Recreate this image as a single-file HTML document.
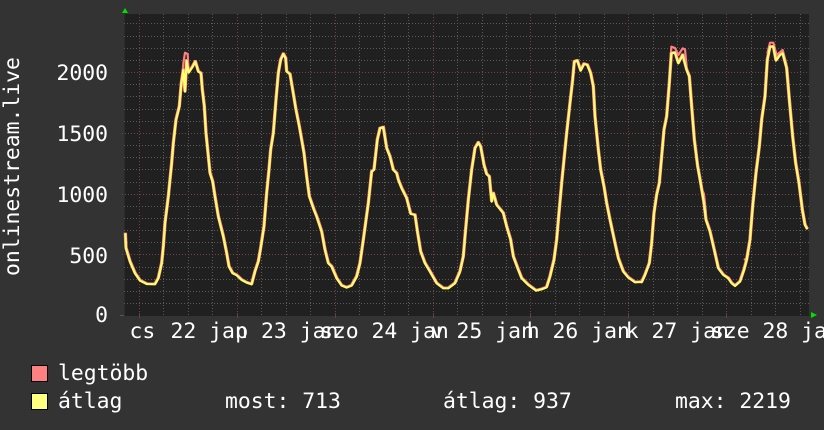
<!DOCTYPE html>
<html>
<head>
<meta charset="utf-8">
<style>
html,body{margin:0;padding:0;background:#333;width:824px;height:430px;overflow:hidden}
svg{display:block}
text{font-family:"DejaVu Sans Mono","Liberation Mono",monospace;font-size:21.4px;fill:#fff}
</style>
</head>
<body>
<svg width="824" height="430" viewBox="0 0 824 430" xmlns="http://www.w3.org/2000/svg">
<defs>
<g id="c" fill="none" stroke-linejoin="round">
<polyline transform="translate(120,40) scale(.33333)" stroke-width="6.5" points="16,580 18,625 30,665 45,700 60,722 80,732 105,733 115,715 125,670 130,620 135,550 145,470 155,370 160,310 168,240 178,200 184,130 190,90 195,155 200,62 206,98 218,80 226,65 235,95 243,100 247,150 253,200 258,280 265,350 270,400 278,425 285,470 295,530 310,590 320,640 327,680 338,700 350,706 365,720 380,728 395,733 405,695 415,665 422,625 432,560 440,460 447,390 452,330 460,280 468,180 475,100 482,60 490,42 497,55 500,95 510,103 518,150 528,210"/>
<polyline transform="translate(290,110) scale(.33333)" stroke-width="6.5" points="18,0 28,50 42,130 50,200 58,260 72,300 80,320 95,365 105,420 115,460 125,470 140,505 155,527 170,533 185,527 200,500 210,460 220,390 235,280 245,185 252,180 262,90 270,55 280,52 290,115 300,140 310,180 320,190 325,210 335,235 350,265 362,312 375,315 383,370 392,425 405,460 420,485 440,520 460,535 475,535 495,520 510,485"/>
<polyline transform="translate(460,50) scale(.33333)" stroke-width="6.5" points="0,665 10,620 15,560 25,450 35,360 45,295 55,278 62,290 72,345 80,373 88,380 95,455 100,430 110,465 130,490 140,530 152,570 160,620 175,660 185,685 205,705 228,722 245,718 260,712 270,680 282,630 290,570 296,500 305,400 312,330 320,250 330,160 338,90 343,35 352,32 362,62 372,42 382,45 392,70 400,110 405,200 415,300 422,360 432,410 440,460 450,510 465,580 475,625 490,665 505,683 525,697 540,696"/>
<polyline transform="translate(630,40) scale(.33333)" stroke-width="6.5" points="30,726 35,727 45,705 58,670 65,610 72,520 80,465 88,430 95,350 102,270 110,230 118,130 124,40 135,38 145,70 158,45 170,90 178,110 185,200 193,300 203,380 212,430 222,490 228,540 240,575 255,640 265,685 280,705 295,715 305,730 315,738 330,725 342,690 350,660 360,600 368,500 378,400 388,320 395,240 405,170 412,60 420,20 430,20 438,62 450,45 458,40 470,85 478,180 488,290 497,370 507,430 517,510 525,555 532,568"/>
</g>
</defs>

<rect x="0" y="0" width="824" height="430" fill="#333"/>
<rect x="124" y="14" width="685" height="302" fill="#202020"/>
<rect x="124" y="14" width="1" height="302" fill="#2b2b2b"/>

<!-- horizontal minor grid -->
<path d="M124 23.5H809M124 36.5H809M124 48.5H809M124 60.5H809M124 84.5H809M124 96.5H809M124 109.5H809M124 121.5H809M124 145.5H809M124 157.5H809M124 169.5H809M124 182.5H809M124 206.5H809M124 218.5H809M124 230.5H809M124 242.5H809M124 267.5H809M124 279.5H809M124 291.5H809M124 303.5H809" stroke="#5a5a5a" stroke-width="1" stroke-dasharray="1 2" fill="none"/>
<!-- vertical minor grid -->
<path d="M163.5 14V316M188.5 14V316M212.5 14V316M261.5 14V316M286.5 14V316M310.5 14V316M359.5 14V316M384.5 14V316M408.5 14V316M457.5 14V316M482.5 14V316M506.5 14V316M555.5 14V316M579.5 14V316M604.5 14V316M653.5 14V316M677.5 14V316M702.5 14V316M751.5 14V316M775.5 14V316M800.5 14V316" stroke="#5a5a5a" stroke-width="1" stroke-dasharray="1 2" fill="none"/>
<!-- major grid -->
<path d="M122 72.5H809M122 133.5H809M122 194.5H809M122 254.5H809" stroke="#704444" stroke-width="1" stroke-dasharray="1 2" fill="none"/>
<path d="M139.5 14V316M237.5 14V316M335.5 14V316M433.5 14V316M530.5 14V316M628.5 14V316M726.5 14V316" stroke="#704444" stroke-width="1" stroke-dasharray="1 2" fill="none"/>
<!-- ticks -->
<path d="M139.5 313V318M237.5 313V318M335.5 313V318M433.5 313V318M530.5 313V318M628.5 313V318M726.5 313V318" stroke="#703c3c" stroke-width="1" fill="none"/>
<path d="M120 315.5H124" stroke="#555" stroke-width="1"/>

<!-- curves -->
<use href="#c" stroke="#ff8080" transform="translate(-0.6,-0.6)"/>
<use href="#c" stroke="#ff8080" transform="translate(0.6,-0.6)"/>
<g fill="none" stroke="#ff8080" stroke-linejoin="round">
<polyline transform="translate(120,40) scale(.33333)" stroke-width="6.5" points="186,120 190,70 195,38 203,42 206,95"/>
<polyline transform="translate(630,40) scale(.33333)" stroke-width="6.5" points="120,90 124,20 135,24 145,45 158,25 165,28 170,80"/>
<polyline transform="translate(630,40) scale(.33333)" stroke-width="6.5" points="412,40 420,8 430,8 440,45 458,30 470,75"/>
<polyline transform="translate(630,40) scale(.33333)" stroke-width="6.5" points="212,440 222,462 228,520"/>
<polyline transform="translate(630,40) scale(.33333)" stroke-width="6.5" points="342,660 350,655 358,620"/>
</g>
<use href="#c" stroke="#ffff70"/>

<!-- axis arrows -->
<polygon points="122,13 128,13 125,8" fill="#00e000"/>
<polygon points="811,312 811,318 817,315" fill="#00e000"/>

<!-- y labels -->
<text x="108" y="80" text-anchor="end">2000</text>
<text x="108" y="141" text-anchor="end">1500</text>
<text x="108" y="202" text-anchor="end">1000</text>
<text x="108" y="263" text-anchor="end">500</text>
<text x="108" y="322" text-anchor="end">0</text>

<!-- y title -->
<text transform="translate(19,276) rotate(-90)" x="0" y="0">onlinestream.live</text>

<!-- x labels -->
<text x="129.5" y="338">cs</text>
<text x="170.5" y="338">22 jan</text>
<text x="235.3" y="338">p 23 jan</text>
<text x="320" y="338">szo 24 jan</text>
<text x="430.8" y="338">v 25 jan</text>
<text x="526.8" y="338">h 26 jan</text>
<text x="625.8" y="338">k 27 jan</text>
<text x="711" y="338">sze 28 jan</text>

<!-- legend -->
<rect x="31.5" y="365.5" width="16" height="16" fill="#ff8080" stroke="#000" stroke-width="1"/>
<rect x="31.5" y="393.5" width="16" height="16" fill="#ffff80" stroke="#000" stroke-width="1"/>
<text x="58" y="380">legtöbb</text>
<text x="58" y="408">átlag</text>
<text x="225" y="408">most: 713</text>
<text x="443" y="408">átlag: 937</text>
<text x="675" y="408">max: 2219</text>
</svg>
</body>
</html>
